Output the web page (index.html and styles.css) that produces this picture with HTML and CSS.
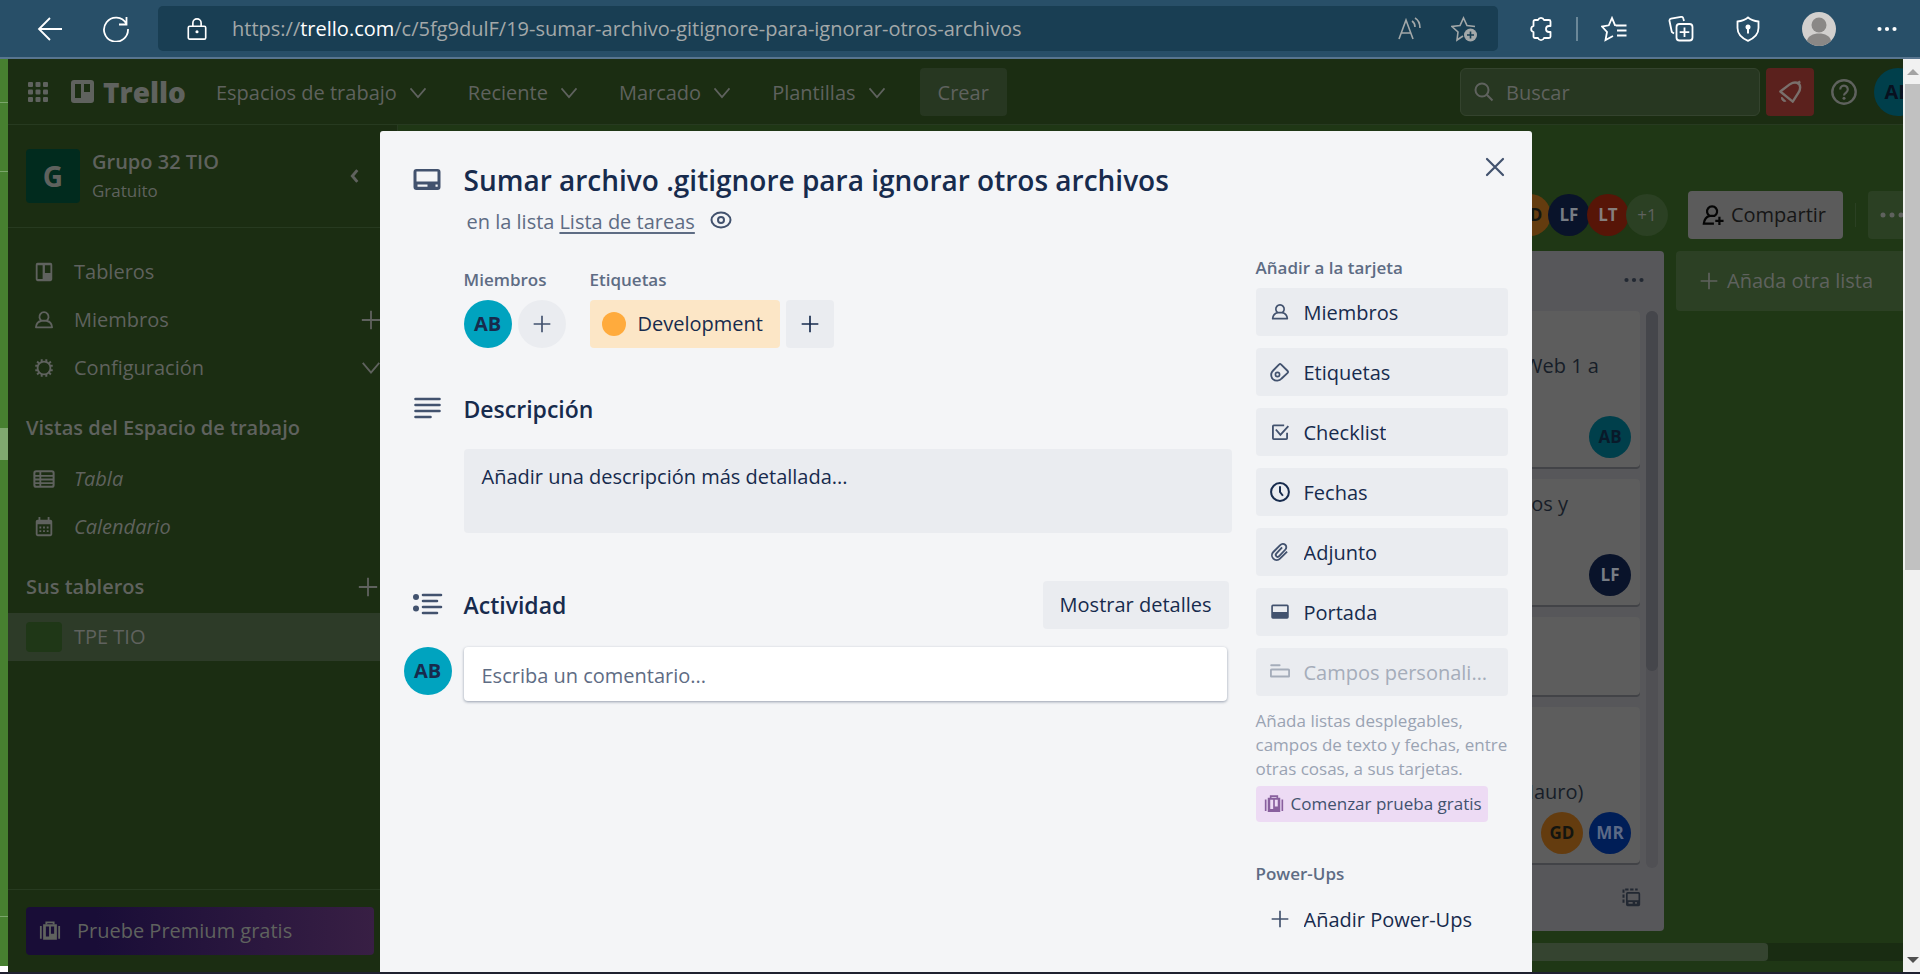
FILE: index.html
```html
<!DOCTYPE html>
<html lang="es">
<head>
<meta charset="utf-8">
<title>Sumar archivo .gitignore para ignorar otros archivos | Trello</title>
<link rel="stylesheet" href="styles.css">
</head>
<body>
<svg class="sprite" aria-hidden="true">
  <symbol id="i-chevron" viewBox="0 0 24 24"><path d="M3 6.500l9 10.500 9-10.500" fill="none" stroke="currentColor" stroke-width="2"/></symbol>
  <symbol id="i-plus" viewBox="0 0 24 24"><path d="M12 2v20M2 12h20" fill="none" stroke="currentColor" stroke-width="2"/></symbol>
  <symbol id="i-person" viewBox="0 0 24 24"><path d="M9.500 12.800a5 5 0 1 1 5 0c3.500.600 6 3 6.300 7.200H3.200c.300-4.200 2.800-6.600 6.300-7.200h5" fill="none" stroke="currentColor" stroke-width="2" stroke-linejoin="round"/></symbol>
  <symbol id="i-board" viewBox="0 0 24 24"><path fill-rule="evenodd" fill="currentColor" d="M5 2h14a2 2 0 0 1 2 2v16a2 2 0 0 1-2 2H5a2 2 0 0 1-2-2V4a2 2 0 0 1 2-2zm0 2.500v15h5.500v-15zm8 0V13h6V4.500z"/></symbol>
  <symbol id="i-case" viewBox="0 0 24 24"><path fill="none" stroke="currentColor" stroke-width="2" d="M8 5V2.500h8V5M2 6.500v14M22 6.500v14"/><path fill="currentColor" fill-rule="evenodd" d="M4.500 4.500h15v17h-15zM7.500 7v11H11V7zm5.500 0v8h3.500V7z"/></symbol>
  <symbol id="i-dots" viewBox="0 0 24 24"><g fill="currentColor"><circle cx="3" cy="12" r="2.500"/><circle cx="12" cy="12" r="2.500"/><circle cx="21" cy="12" r="2.500"/></g></symbol>
</svg>

<header class="browser">
  <button class="tool back" aria-label="Atrás"><svg viewBox="0 0 26 26"><path d="M25 13H2M13 2L2 13l11 11" fill="none" stroke="currentColor" stroke-width="1.800"/></svg></button>
  <button class="tool reload" aria-label="Actualizar"><svg viewBox="0 0 26 26"><path d="M23.300 7.500A12 12 0 1 0 25 13M23.500 1v7.500H16" fill="none" stroke="currentColor" stroke-width="1.800"/></svg></button>
  <div class="address">
    <svg class="lock" viewBox="0 0 24 24"><path d="M4 9h16a1.500 1.500 0 0 1 1.500 1.500v11A1.500 1.500 0 0 1 20 23H4a1.500 1.500 0 0 1-1.500-1.500v-11A1.500 1.500 0 0 1 4 9zM7.500 9V5.500a4.500 4.500 0 0 1 9 0V9" fill="none" stroke="currentColor" stroke-width="1.800"/><circle cx="12" cy="15" r="1.700" fill="currentColor"/></svg>
    <span class="url">https://<b>trello.com</b>/c/5fg9dulF/19-sumar-archivo-gitignore-para-ignorar-otros-archivos</span>
    <button class="tool dim" aria-label="Leer en voz alta"><svg viewBox="0 0 26 26"><path d="M2 23L9 4l7 19M4.500 17h9M15 5q3 2 3 6M18 2q5 3 5 10" fill="none" stroke="currentColor" stroke-width="1.600"/></svg></button>
    <button class="tool dim star" aria-label="Agregar a favoritos"><svg viewBox="0 0 26 26"><path d="M12 20l-6 4 1-8L1 10.500l8-1L12.500 2 16 9.500l8 1" fill="none" stroke="currentColor" stroke-width="1.600"/><circle cx="19.500" cy="19" r="6.500" fill="currentColor"/><path d="M19.500 15.500v7M16 19h7" stroke="#193e53" stroke-width="1.600"/></svg></button>
  </div>
  <nav class="tools">
    <button class="tool" aria-label="Extensiones"><svg viewBox="0 0 26 26"><path d="M8 4h3a3.200 3.200 0 0 1 6 0h5a1.500 1.500 0 0 1 1.500 1.500V10h-1.500a3 3 0 0 0 0 6h1.500v4.500A1.500 1.500 0 0 1 22 22h-5a3.200 3.200 0 0 1-6 0H8a1.500 1.500 0 0 1-1.500-1.500V16a3.100 3.100 0 0 1 0-6V5.500A1.500 1.500 0 0 1 8 4z" fill="none" stroke="currentColor" stroke-width="1.800" stroke-linejoin="round"/></svg></button>
    <i class="rule"></i>
    <button class="tool" aria-label="Favoritos"><svg viewBox="0 0 26 26"><path d="M15 9.500l-1-.300L11 2 7.800 9.300 1 10.500l5 5.500-1.500 8 7.500-4M15 9.500h10.500M16 14.500h9.500M16 19.500h9.500" fill="none" stroke="currentColor" stroke-width="1.800"/></svg></button>
    <button class="tool" aria-label="Colecciones"><svg viewBox="0 0 26 26"><path d="M6 17.500L3.800 16 1.500 5a2 2 0 0 1 1.500-2.300L13 .900a2 2 0 0 1 2.300 1.500L16 5" fill="none" stroke="currentColor" stroke-width="1.800"/><rect x="8.500" y="8" width="16" height="16.500" rx="3" fill="none" stroke="currentColor" stroke-width="1.800"/><path d="M16.500 11.500v9.500M11.700 16.200h9.600" stroke="currentColor" stroke-width="1.800"/></svg></button>
    <button class="tool" aria-label="Seguridad"><svg viewBox="0 0 26 26"><path d="M13 1.500c3 2.500 6 3.500 10.500 4V12c0 6-4 10-10.500 12.800C6.500 22 2.500 18 2.500 12V5.500C7 5 10 4 13 1.500z" fill="none" stroke="currentColor" stroke-width="1.800"/><circle cx="13" cy="11" r="2.500" fill="currentColor"/><path d="M13 11v6.500" stroke="currentColor" stroke-width="2"/></svg></button>
    <button class="tool profile" aria-label="Perfil"><svg viewBox="0 0 34 34"><circle cx="17" cy="17" r="17" fill="#d2d0ce"/><circle cx="17" cy="13" r="7.500" fill="#8a8886"/><path d="M5 29c1-10 23-10 24 0a17 17 0 0 1-24 0z" fill="#8a8886"/></svg></button>
    <button class="tool" aria-label="Más"><svg class="more" viewBox="0 0 24 24"><use href="#i-dots"/></svg></button>
  </nav>
</header>

<div class="viewport">
  <div class="edge"><i class="e1"></i><i class="e2"></i><i class="e3"></i><i class="e4"></i><i class="e5"></i><i class="e6"></i></div>

  <div class="page">
    <header class="topbar">
      <button class="plain" aria-label="Más de Atlassian"><svg class="grid9" viewBox="0 0 20 20"><g fill="currentColor"><rect width="5" height="5" rx="1"/><rect x="7.500" width="5" height="5" rx="1"/><rect x="15" width="5" height="5" rx="1"/><rect y="7.500" width="5" height="5" rx="1"/><rect x="7.500" y="7.500" width="5" height="5" rx="1"/><rect x="15" y="7.500" width="5" height="5" rx="1"/><rect y="15" width="5" height="5" rx="1"/><rect x="7.500" y="15" width="5" height="5" rx="1"/><rect x="15" y="15" width="5" height="5" rx="1"/></g></svg></button>
      <a class="brand" href="#"><svg viewBox="0 0 23 23"><path fill="currentColor" fill-rule="evenodd" d="M3 0h17a3 3 0 0 1 3 3v17a3 3 0 0 1-3 3H3a3 3 0 0 1-3-3V3a3 3 0 0 1 3-3zm1 4v14h6V4zm9 0v8h6V4z"/></svg>Trello</a>
      <nav class="menus">
        <button class="menu">Espacios de trabajo<svg><use href="#i-chevron"/></svg></button>
        <button class="menu">Reciente<svg><use href="#i-chevron"/></svg></button>
        <button class="menu">Marcado<svg><use href="#i-chevron"/></svg></button>
        <button class="menu">Plantillas<svg><use href="#i-chevron"/></svg></button>
      </nav>
      <button class="create">Crear</button>
      <label class="search"><svg viewBox="0 0 20 20"><circle cx="8" cy="8" r="6.500" fill="none" stroke="currentColor" stroke-width="2"/><path d="M12.800 12.800L18.500 18.500" stroke="currentColor" stroke-width="2"/></svg><input type="text" placeholder="Buscar" aria-label="Buscar"></label>
      <button class="bell" aria-label="Notificaciones"><svg viewBox="0 0 26 26"><path d="M2.500 12.500L13 4.500q4-2.500 7.500-1.500 3.500 1 3.500 5 0 3-2 6l-6 9.500z" fill="none" stroke="currentColor" stroke-width="2.600" stroke-linejoin="round"/><path d="M4 18.500a3.500 3.500 0 0 0 4.500 4.500z" fill="currentColor" stroke="currentColor"/><path d="M21 4l3-2.500" stroke="currentColor" stroke-width="2.600"/></svg></button>
      <button class="help" aria-label="Información"><svg viewBox="0 0 26 26"><circle cx="13" cy="13" r="11.700" fill="none" stroke="currentColor" stroke-width="2.400"/><path d="M9.200 10.500a3.800 3.800 0 1 1 6 3c-1.500 1-2.200 1.500-2.200 3" fill="none" stroke="currentColor" stroke-width="2.200"/><circle cx="13" cy="19.300" r="1.500" fill="currentColor"/></svg></button>
      <button class="me">AB</button>
    </header>

    <div class="main">
      <aside class="sidebar">
        <div class="space">
          <span class="space-logo">G</span>
          <span class="space-name"><b>Grupo 32 TIO</b><small>Gratuito</small></span>
          <button class="plain collapse" aria-label="Contraer"><svg viewBox="0 0 12 20"><path d="M10 3L4 10l6 7" fill="none" stroke="currentColor" stroke-width="3.500"/></svg></button>
        </div>
        <ul class="side-list first">
          <li><svg><use href="#i-board"/></svg><a href="#">Tableros</a></li>
          <li><svg><use href="#i-person"/></svg><a href="#">Miembros</a><button class="plain" aria-label="Invitar"><svg><use href="#i-plus"/></svg></button></li>
          <li><svg viewBox="0 0 24 24"><circle cx="12" cy="12" r="7" fill="none" stroke="currentColor" stroke-width="2"/><path d="M9.500 2.500v3M14.500 2.500v3M9.500 18.500v3M14.500 18.500v3M2.500 9.500h3M2.500 14.500h3M18.500 9.500h3M18.500 14.500h3M4.500 5l2.500 2.500M19.500 5L17 7.500M4.500 19L7 16.500M19.500 19L17 16.500" stroke="currentColor" stroke-width="2.200"/></svg><a href="#">Configuración</a><button class="plain" aria-label="Abrir"><svg><use href="#i-chevron"/></svg></button></li>
        </ul>
        <h2 class="side-title">Vistas del Espacio de trabajo</h2>
        <ul class="side-list italic">
          <li><svg viewBox="0 0 24 24"><rect x="1.500" y="3.500" width="21" height="17" rx="2" fill="none" stroke="currentColor" stroke-width="2.200"/><path d="M2 8.500h20M2 12.500h20M2 16.500h20M8 4v16" stroke="currentColor" stroke-width="2"/></svg><a href="#">Tabla</a></li>
          <li><svg viewBox="0 0 24 24"><path fill="currentColor" fill-rule="evenodd" d="M6 1h2v3h8V1h2v3h1a2 2 0 0 1 2 2v14a2 2 0 0 1-2 2H5a2 2 0 0 1-2-2V6a2 2 0 0 1 2-2h1zM5 9v11h14V9z"/><path d="M7 12.500h10M7 16.500h10" stroke="currentColor" stroke-width="2" stroke-dasharray="2 2"/></svg><a href="#">Calendario</a></li>
        </ul>
        <div class="side-head"><h2 class="side-title">Sus tableros</h2><button class="plain" aria-label="Crear tablero"><svg><use href="#i-plus"/></svg></button></div>
        <a class="board-row" href="#"><i></i>TPE TIO</a>
        <div class="side-foot"><button class="premium"><svg><use href="#i-case"/></svg>Pruebe Premium gratis</button></div>
      </aside>

      <section class="board">
        <div class="board-head">
          <div class="faces"><span class="av gold">GD</span><span class="av navy">LF</span><span class="av red">LT</span><span class="av extra">+1</span></div>
          <button class="share"><svg viewBox="0 0 24 24"><path d="M8.500 13a5.500 5.500 0 1 1 5 0M8.500 13c-4 1-6 3.500-6.500 8.500h11M8 13h6" fill="none" stroke="currentColor" stroke-width="2.400"/><path d="M19 14v9M14.500 18.500h9" stroke="currentColor" stroke-width="2.400"/></svg>Compartir</button>
          <i class="split"></i>
          <button class="board-more" aria-label="Mostrar menú"><svg><use href="#i-dots"/></svg></button>
        </div>
        <div class="lists">
          <div class="list">
            <div class="list-head"><button class="plain" aria-label="Acciones de lista"><svg><use href="#i-dots"/></svg></button></div>
            <div class="list-body">
              <div class="cards">
                <article class="card labelled"><p>Web 1 a</p><div class="card-faces"><span class="av teal">AB</span></div></article>
                <article class="card"><p>tos y</p><div class="card-faces"><span class="av navy">LF</span></div></article>
                <article class="card blank"></article>
                <article class="card tall"><p>Mauro)</p><div class="card-faces"><span class="av gold">GD</span><span class="av blue">MR</span></div></article>
              </div>
              <div class="list-scroll"><i></i></div>
            </div>
            <div class="list-foot"><button class="plain" aria-label="Crear desde plantilla"><svg viewBox="0 0 24 24"><path d="M3 19V3h17" fill="none" stroke="currentColor" stroke-width="2.400" stroke-dasharray="4 2"/><path fill="currentColor" fill-rule="evenodd" d="M8 6h13a2 2 0 0 1 2 2v13a2 2 0 0 1-2 2H8a2 2 0 0 1-2-2V8a2 2 0 0 1 2-2zm0 2v8h13V8zm1 10v2h5v-2zm8 0v2h2v-2z"/></svg></button></div>
          </div>
          <button class="add-list"><svg><use href="#i-plus"/></svg>Añada otra lista</button>
        </div>
        <div class="hscroll"><i></i></div>
      </section>
    </div>

    <div class="overlay">
      <main class="modal" role="dialog" aria-labelledby="card-title">
        <button class="close" aria-label="Cerrar"><svg viewBox="0 0 20 20"><path d="M2 2l16 16M18 2L2 18" stroke="currentColor" stroke-width="2.200" stroke-linecap="round"/></svg></button>
        <div class="title-row">
          <svg viewBox="0 0 28 24"><path fill="currentColor" fill-rule="evenodd" d="M3.500 1h21a3 3 0 0 1 3 3v15a3 3 0 0 1-3 3h-21a3 3 0 0 1-3-3V4a3 3 0 0 1 3-3zm0 2.500v10h21v-10zM4.500 16.500v2.200h10v-2.200zm18 0v2.200h2.200v-2.200z"/></svg>
          <h1 id="card-title">Sumar archivo .gitignore para ignorar otros archivos</h1>
        </div>
        <p class="in-list">en la lista <a href="#">Lista de tareas</a><svg viewBox="0 0 24 24"><ellipse cx="12" cy="12" rx="9.500" ry="7.500" fill="none" stroke="currentColor" stroke-width="2"/><circle cx="12" cy="12" r="3" fill="none" stroke="currentColor" stroke-width="2"/></svg></p>
        <div class="columns">
          <div class="content">
            <div class="meta">
              <section><h3>Miembros</h3><div class="row"><button class="av big teal">AB</button><button class="round" aria-label="Añadir miembro"><svg><use href="#i-plus"/></svg></button></div></section>
              <section><h3>Etiquetas</h3><div class="row"><button class="tag"><i></i>Development</button><button class="square" aria-label="Añadir etiqueta"><svg><use href="#i-plus"/></svg></button></div></section>
            </div>
            <section class="description">
              <div class="head"><svg viewBox="0 0 32 24"><path d="M3.500 2h24M3.500 8h24M3.500 14h24M3.500 20h15" stroke="currentColor" stroke-width="2.600" stroke-linecap="round"/></svg><h2>Descripción</h2></div>
              <textarea placeholder="Añadir una descripción más detallada..." aria-label="Descripción"></textarea>
            </section>
            <section class="activity">
              <div class="head"><svg viewBox="0 0 32 24"><path d="M11 2h18M11 8h14M11 14h18M11 20h14" stroke="currentColor" stroke-width="2.600" stroke-linecap="round"/><circle cx="4" cy="4" r="3" fill="currentColor"/><circle cx="4" cy="15.500" r="3" fill="currentColor"/></svg><h2>Actividad</h2><button class="details">Mostrar detalles</button></div>
              <div class="comment"><span class="av big teal">AB</span><input type="text" placeholder="Escriba un comentario..." aria-label="Comentario"></div>
            </section>
          </div>
          <aside class="actions">
            <h3>Añadir a la tarjeta</h3>
            <div class="stack">
            <button class="action"><svg><use href="#i-person"/></svg><span>Miembros</span></button>
            <button class="action"><svg viewBox="0 0 24 24"><path d="M3.500 10.500L11 2.800a1.500 1.500 0 0 1 2.200 0l8 8a1.500 1.500 0 0 1 0 2.200L14 19.800a7.200 7.200 0 0 1-10.500.700 7 7 0 0 1 0-10z" fill="none" stroke="currentColor" stroke-width="2.200"/><circle cx="9" cy="15" r="2.500" fill="none" stroke="currentColor" stroke-width="2"/></svg><span>Etiquetas</span></button>
            <button class="action"><svg viewBox="0 0 24 24"><path d="M17 4H4.500a1 1 0 0 0-1 1v14.500a1 1 0 0 0 1 1h15a1 1 0 0 0 1-1V13M7 9l5.500 6.500L22 5" fill="none" stroke="currentColor" stroke-width="2.200"/></svg><span>Checklist</span></button>
            <button class="action"><svg class="clock" viewBox="0 0 24 24"><circle cx="12" cy="12" r="10.700" fill="none" stroke="currentColor" stroke-width="2.400"/><path d="M12 5v7l3.500 4.500" fill="none" stroke="currentColor" stroke-width="2.400"/></svg><span>Fechas</span></button>
            <button class="action"><svg viewBox="0 0 24 24"><path d="M20.500 11.500L12 20a5.500 5.500 0 0 1-8-8l8.500-8.500a3.900 3.900 0 0 1 6 5.500L11 17a2.200 2.200 0 0 1-3.500-3l7-7.500" fill="none" stroke="currentColor" stroke-width="2.200"/></svg><span>Adjunto</span></button>
            <button class="action"><svg viewBox="0 0 24 24"><path fill="currentColor" fill-rule="evenodd" d="M3.500 3h17a2 2 0 0 1 2 2v13a2 2 0 0 1-2 2h-17a2 2 0 0 1-2-2V5a2 2 0 0 1 2-2zm0 2v7h17V5z"/></svg><span>Portada</span></button>
            <button class="action" disabled><svg viewBox="0 0 24 24"><path d="M1.500 4h10" stroke="currentColor" stroke-width="2.400" stroke-linecap="round"/><rect x="1" y="9" width="22" height="8.500" rx="1.500" fill="none" stroke="currentColor" stroke-width="2.400"/></svg><span>Campos personalizados</span></button>
            </div>
            <p>Añada listas desplegables, campos de texto y fechas, entre otras cosas, a sus tarjetas.</p>
            <button class="trial"><svg><use href="#i-case"/></svg>Comenzar prueba gratis</button>
            <h3 class="power">Power-Ups</h3>
            <button class="action clear"><svg><use href="#i-plus"/></svg><span>Añadir Power-Ups</span></button>
          </aside>
        </div>
      </main>
    </div>
  </div>

  <div class="scrollbar"><i class="up"></i><i class="thumb"></i><i class="down"></i></div>
</div>
<footer class="taskbar"></footer>
</body>
</html>
```
FILE: styles.css
```css
* { box-sizing: border-box; }
html, body { height: 100%; }
body {
  margin: 0;
  display: flex;
  flex-direction: column;
  overflow: hidden;
  font: 20px/30px "Open Sans", "Noto Sans", sans-serif;
  color: #172b4d;
}
button, input, textarea { font: inherit; color: inherit; border: 0; background: none; padding: 0; margin: 0; border-radius: 4px; text-align: left; }
a { color: inherit; text-decoration: none; }
h1, h2, h3, p, ul { margin: 0; padding: 0; list-style: none; }
svg { display: block; width: 24px; height: 24px; flex: none; }
i { display: block; }
.sprite { display: none; }
.plain { display: flex; }

.browser {
  flex: none;
  display: flex;
  align-items: center;
  height: 59px;
  padding: 0 23px 0 37px;
  background: #284f68;
  border-bottom: 2px solid #58758f;
  color: #fff;
}
.tool { display: flex; flex: none; }
.tool svg { width: 26px; height: 26px; }
.reload { margin: 0 29px 0 40px; }
.address { flex: 1; display: flex; align-items: center; height: 45px; padding: 0 21px 0 28px; background: #193e53; border-radius: 5px; }
.address .lock { width: 22px; height: 24px; margin-right: 24px; }
.url { flex: 1; color: #a3a8a9; white-space: nowrap; }
.url b { font-weight: 400; color: #fff; }
.dim { color: #a3a8a9; }
.star { margin-left: 28px; }
.tools { display: flex; align-items: center; margin-left: 29px; gap: 41px; }
.rule { width: 2px; height: 24px; margin: 0 -18px; background: #6b8899; }
.tools .profile svg { width: 34px; height: 34px; }
.tools svg.more { width: 20px; height: 20px; }

.viewport { flex: 1; display: flex; min-height: 0; }
.edge { width: 8px; flex: none; display: flex; flex-direction: column; background: #478030; }
.edge .e1, .edge .e2, .edge .e4 { border-bottom: 1px solid #7aa56a; }
.edge .e1 { height: 44px; }
.edge .e2 { height: 69px; }
.edge .e3 { height: 256px; }
.edge .e5 { height: 49px; }
.edge .e4 { flex: 1; border-top: 32px solid #80a870; }
.edge .e6 { height: 6px; background: #fff; }

.page { flex: 1; min-width: 0; position: relative; display: flex; flex-direction: column; overflow: hidden; background: #1f3715; color: #5f625e; }
.topbar { flex: none; display: flex; align-items: center; height: 66px; padding-left: 20px; background: #1b2d12; border-bottom: 1px solid #273a20; white-space: nowrap; }
.grid9 { width: 20px; height: 20px; }
.brand { display: flex; align-items: center; gap: 9px; margin-left: 23px; font-size: 28px; font-weight: 800; }
.brand svg { width: 23px; height: 23px; }
.menus { display: flex; gap: 40px; margin-left: 30px; padding-top: 2px; }
.menu { display: flex; align-items: center; gap: 11px; }
.menu svg { width: 20px; height: 20px; }
.create { margin-left: 33px; height: 48px; padding: 2px 18px 0; background: #273721; }
.search { flex: none; width: 300px; height: 48px; margin-left: auto; display: flex; align-items: center; padding: 0 13px; background: #273721; border: 1px solid #34432e; border-radius: 6px; }
.search svg { width: 20px; height: 20px; }
.search input { flex: 1; min-width: 0; margin-left: 12px; padding-top: 2px; }
::placeholder { color: inherit; opacity: 1; }
.bell { flex: none; width: 48px; height: 48px; margin-left: 6px; background: #5b211d; display: grid; place-items: center; color: #7a706c; }
.help { margin-left: 17px; }
.help svg { width: 26px; height: 26px; }
.me { flex: none; width: 48px; height: 48px; margin: 0 -19px 0 17px; border-radius: 50%; background: #003f4b; color: #08111f; font-weight: 700; text-align: center; }

.main { flex: 1; display: flex; min-height: 0; }
.sidebar { flex: none; width: 390px; display: flex; flex-direction: column; background: #1b2d12; border-right: 1px solid #273a20; }
.space { display: flex; align-items: center; height: 103px; padding: 0 38px 0 18px; border-bottom: 1px solid #273a20; }
.space-logo { width: 54px; height: 54px; border-radius: 4px; background: #012b1e; display: grid; place-items: center; font-size: 28px; font-weight: 700; }
.space-name { flex: 1; margin-left: 12px; display: flex; flex-direction: column; }
.space-name b { font-weight: 600; line-height: 30px; }
.space-name small { font-size: 17px; line-height: 28px; }
.collapse svg { width: 10px; height: 18px; }
.side-list svg { width: 22px; height: 22px; }
.side-list li { display: flex; align-items: center; height: 48px; padding: 0 15px 0 25px; }
.side-list a { flex: 1; margin-left: 19px; }
.first { padding-top: 20px; }
.italic { font-style: italic; }
.side-title { font-size: 20px; line-height: 30px; font-weight: 600; padding-left: 18px; }
.first + .side-title { margin: 21px 0 12px; }
.side-head { display: flex; align-items: center; justify-content: space-between; margin: 21px 18px 11px 0; }
.side-head svg { width: 22px; height: 22px; }
.board-row { display: flex; align-items: center; height: 48px; padding-left: 18px; background: #2d3b28; }
.board-row i { width: 36px; height: 30px; margin-right: 12px; border-radius: 4px; background: #1f3717; }
.side-foot { margin-top: auto; padding: 17px 23px 17px 18px; border-top: 1px solid #273a20; }
.premium { display: flex; align-items: center; width: 100%; height: 48px; padding-left: 13px; gap: 16px; background: linear-gradient(90deg, #190d37 20%, #381f44); }
.premium svg { width: 22px; height: 22px; }

.board { flex: 1; min-width: 0; display: flex; flex-direction: column; overflow: hidden; }
.board-head { display: flex; align-items: center; justify-content: flex-end; height: 126px; padding: 54px 0 0; }
.faces { display: flex; }
.av { flex: none; width: 42px; height: 42px; border-radius: 50%; display: grid; place-items: center; font-size: 17px; font-weight: 700; text-align: center; }
.faces .av + .av { margin-left: -3px; }
.gold { background: #643c0f; color: #14150f; }
.navy { background: #09132a; color: #777c84; }
.red { background: #571507; color: #857e7c; }
.blue { background: #001e57; color: #5c6a86; }
.teal { background: #003f4b; color: #091a2a; }
.extra { background: #2b4023; font-weight: 400; }
.share { display: flex; align-items: center; gap: 7px; height: 48px; margin-left: 20px; padding: 0 17px 0 14px; background: #5b5b5b; color: #161616; }
.share svg { width: 22px; height: 22px; color: #050505; }
.split { width: 1px; height: 24px; margin-left: 12px; background: #2b4023; }
.board-more { display: flex; align-items: center; flex: none; width: 48px; height: 48px; margin-left: 12px; margin-right: -13px; padding-left: 12px; background: #2b4023; }

.lists { flex: 1; min-height: 0; display: flex; justify-content: flex-end; gap: 12px; }
.list { flex: none; width: 408px; display: flex; flex-direction: column; padding-left: 12px; background: #57575a; border-radius: 4px; color: #171d28; }
.list svg { width: 20px; height: 20px; color: #222832; }
.list-head { height: 60px; padding: 19px 20px; display: flex; justify-content: flex-end; }
.list-body { flex: 1; display: flex; }
.cards { flex: none; width: 372px; }
.card { height: 126px; margin-bottom: 12px; padding: 10px 9px 9px 256px; display: flex; flex-direction: column; justify-content: space-between; background: #5d5d5d; border-radius: 4px; box-shadow: 0 2px 0 #424347; white-space: nowrap; }
.labelled { height: 156px; padding-top: 40px; }
.blank { height: 78px; }
.tall { height: 156px; padding: 70px 9px 9px 248px; }
.card-faces { display: flex; justify-content: flex-end; gap: 6px; }
.tall .card-faces { margin-top: -10px; }
.list-scroll { width: 12px; height: 557px; margin-left: 6px; border-radius: 6px; background: #505054; }
.list-scroll i { height: 360px; border-radius: 6px; background: #45464b; }
.list-foot { height: 52px; padding: 8px 23px; display: flex; justify-content: flex-end; }
.add-list { flex: none; display: flex; align-items: center; gap: 8px; width: 227px; height: 60px; padding-left: 23px; background: #2c4024; border-radius: 4px 0 0 4px; white-space: nowrap; }
.add-list svg { width: 20px; height: 20px; }
.hscroll { flex: none; height: 18px; margin: 12px 0 11px; background: #192c12; }
.hscroll i { height: 18px; width: 91%; border-radius: 4px; background: #354430; }

.overlay { position: absolute; inset: 72px 0 0; display: flex; justify-content: center; color: #172b4d; }
.modal { width: 1152px; position: relative; padding: 31px 24px 0 24px; background: #f4f5f7; border-radius: 3px 3px 0 0; }
.modal svg { color: #42526e; }
.close { position: absolute; top: 26px; right: 27px; }
.close svg { width: 20px; height: 20px; }
.title-row { display: flex; align-items: center; padding-left: 9px; }
.title-row svg { width: 28px; height: 24px; }
h1 { margin-left: 23px; font-size: 28px; line-height: 36px; font-weight: 600; }
.in-list { display: flex; align-items: center; padding: 9px 0 0 63px; color: #5e6c84; }
.in-list a { margin-left: 5px; text-decoration: underline; text-underline-offset: 3px; }
.in-list svg { margin: -4px 0 0 14px; }
.columns { display: flex; gap: 24px; margin-top: 16px; }
.content { flex: 1; min-width: 0; padding-top: 12px; }
h3 { font-size: 17px; line-height: 30px; font-weight: 600; color: #5e6c84; }
.meta { display: flex; gap: 24px; padding-left: 60px; }
.row { display: flex; gap: 6px; margin-top: 5px; }
.av.big { width: 48px; height: 48px; font-size: 20px; }
.modal .teal { background: #00a3bf; color: #172b4d; }
.round, .square { width: 48px; height: 48px; display: grid; place-items: center; background: #eaecf0; }
.round { border-radius: 50%; }
.round svg, .square svg { width: 20px; height: 20px; }
.modal .square svg { color: #172b4d; }
.tag { display: flex; align-items: center; gap: 12px; height: 48px; padding: 0 17px 0 12px; background: #fce6c6; }
.tag i { width: 24px; height: 24px; border-radius: 50%; background: #ffab3d; }
.head { display: flex; align-items: center; height: 48px; padding: 0 3px 0 8px; }
.head svg { width: 32px; height: 24px; }
h2 { font-size: 23px; line-height: 30px; font-weight: 600; }
.head h2 { margin-left: 20px; flex: 1; }
.description { margin-top: 37px; }
textarea { display: block; width: calc(100% - 60px); height: 84px; margin: 16px 0 0 60px; padding: 13px 18px; background: #eaecf0; resize: none; }
.activity { margin-top: 48px; }
.details { height: 48px; padding: 0 17px; background: #eaecf0; }
.comment { display: flex; gap: 12px; margin: 18px 5px 0 0; }
.comment input { flex: 1; height: 54px; padding: 2px 18px 0; background: #fff; border-radius: 4px; box-shadow: 0 1px 3px #091e4266; color: #5e6c84; }
.actions { width: 252px; flex: none; }
.stack { display: flex; flex-direction: column; gap: 12px; margin-top: 5px; }
.action { display: flex; align-items: center; width: 100%; height: 48px; padding: 0 18px 0 14px; background: #eaecf0; white-space: nowrap; }
.action svg { width: 20px; height: 20px; margin-right: 14px; }
.action span { overflow: hidden; text-overflow: ellipsis; padding-top: 1px; }
.modal .clock { color: #172b4d; }
.action:disabled, .modal .action:disabled svg { color: #a5adba; }
.clear { background: none; }
.actions p { margin-top: 13px; font-size: 17px; line-height: 24px; color: #9aa3b3; }
.trial { display: flex; align-items: center; gap: 7px; height: 36px; margin-top: 5px; padding: 0 6px 0 8px; background: #eddbf4; color: #42526e; font-size: 17px; white-space: nowrap; }
.modal .trial svg { width: 20px; height: 20px; color: #89609e; }
.power { margin: 37px 0 6px; }

.scrollbar { width: 17px; flex: none; display: flex; flex-direction: column; background: #f1f1f1; padding-left: 2px; }
.up, .down { height: 25px; display: grid; place-items: center; }
.up::before, .down::before { content: ""; border: 6px solid transparent; border-top: 0; border-bottom-color: #a3a3a3; }
.down { margin-top: auto; }
.down::before { border: 6px solid transparent; border-bottom: 0; border-top-color: #505050; }
.thumb { height: 486px; background: #c1c1c1; }
.taskbar { flex: none; height: 2px; background: #1f2130; }
```
